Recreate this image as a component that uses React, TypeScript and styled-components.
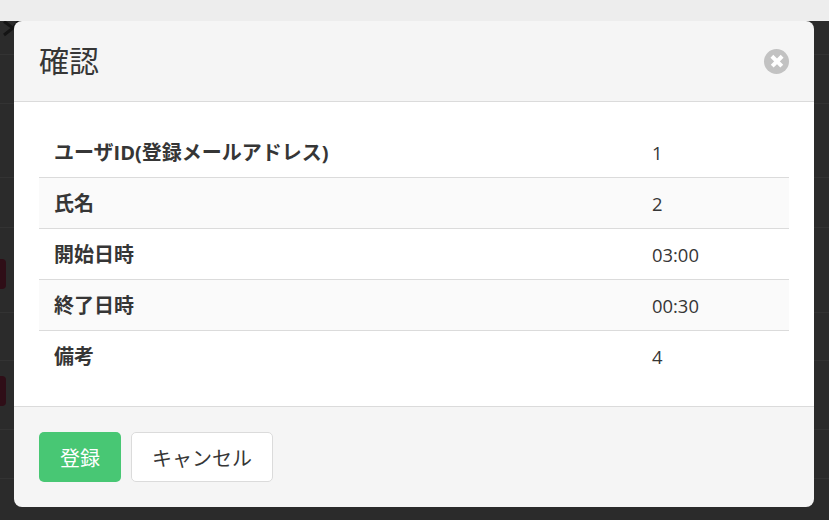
import styled, { createGlobalStyle } from "styled-components"

const rows = [
  { label: "ユーザID(登録メールアドレス)", value: "1" },
  { label: "氏名", value: "2" },
  { label: "開始日時", value: "03:00" },
  { label: "終了日時", value: "00:30" },
  { label: "備考", value: "4" },
]

// rows of the page behind the dimmed overlay
const backdropRows = [
  { height: 34 },
  { height: 49 },
  { height: 74 },
  { height: 50 },
  { height: 85, badgeTop: 31 },
  { height: 48 },
  { height: 69, badgeTop: 15 },
  { height: 49 },
]

export default function App() {
  return (
    <>
      <GlobalStyle />
      <Page>
        <TopBar />
        <Backdrop>
          <CrossIcon viewBox="0 0 24 16">
            <path d="M4 0.5 L13 7 L4 14 M13 7 L20 -1" />
          </CrossIcon>
          {backdropRows.map((row, i) => (
            <BackdropRow key={i} $height={row.height}>
              {row.badgeTop !== undefined && <Badge $top={row.badgeTop} />}
            </BackdropRow>
          ))}
        </Backdrop>
        <Modal>
          <Header>
            <Title>確認</Title>
            <CloseButton aria-label="close" />
          </Header>
          <Body>
            <Table>
              <tbody>
                {rows.map((row) => (
                  <tr key={row.label}>
                    <LabelCell>{row.label}</LabelCell>
                    <ValueCell>{row.value}</ValueCell>
                  </tr>
                ))}
              </tbody>
            </Table>
          </Body>
          <Footer>
            <SubmitButton>登録</SubmitButton>
            <CancelButton>キャンセル</CancelButton>
          </Footer>
        </Modal>
      </Page>
    </>
  )
}

const fontStack = `"Open Sans", "Noto Sans CJK JP", sans-serif`

const GlobalStyle = createGlobalStyle`
  html, body {
    margin: 0;
    padding: 0;
    background: #2b2b2b;
  }
`

const Page = styled.div`
  position: relative;
  width: 829px;
  height: 520px;
  overflow: hidden;
  background: #2b2b2b;
  font-family: ${fontStack};
`

const TopBar = styled.div`
  height: 21px;
  background: #ededed;
`

const Backdrop = styled.div`
  position: relative;
  height: 499px;
  background: #2b2b2b;
`

const CrossIcon = styled.svg`
  position: absolute;
  top: 0;
  left: 0;
  width: 24px;
  height: 16px;
  fill: none;
  stroke: #141414;
  stroke-width: 3;
`

const BackdropRow = styled.div<{ $height: number }>`
  position: relative;
  height: ${(p) => p.$height}px;
  border-bottom: 1px solid #333333;
  box-sizing: border-box;
`

const Badge = styled.div<{ $top: number }>`
  position: absolute;
  top: ${(p) => p.$top}px;
  left: -8px;
  width: 14px;
  height: 30px;
  border-radius: 4px;
  background: #2f0e17;
`

const Modal = styled.div`
  position: absolute;
  top: 21px;
  left: 14px;
  width: 800px;
  height: 486px;
  display: flex;
  flex-direction: column;
  border-radius: 8px;
  overflow: hidden;
  background: #f5f5f5;
`

const Header = styled.header`
  flex: none;
  height: 81px;
  box-sizing: border-box;
  display: flex;
  align-items: center;
  justify-content: space-between;
  padding: 0 25px;
  border-bottom: 1px solid #dbdbdb;
`

const Title = styled.p`
  margin: 0;
  font-size: 30px;
  line-height: 1;
  color: #363636;
`

const CloseButton = styled.button`
  position: relative;
  width: 25px;
  height: 25px;
  padding: 0;
  border: none;
  border-radius: 50%;
  background: #c2c2c2;

  &::before,
  &::after {
    content: "";
    position: absolute;
    top: 50%;
    left: 50%;
    width: 14px;
    height: 3.5px;
    background: #ffffff;
    transform: translate(-50%, -50%) rotate(45deg);
  }

  &::after {
    transform: translate(-50%, -50%) rotate(-45deg);
  }
`

const Body = styled.section`
  flex: none;
  height: 304px;
  box-sizing: border-box;
  padding: 24px 25px 0;
  background: #ffffff;
`

const Table = styled.table`
  width: 100%;
  border-collapse: collapse;
  color: #363636;

  tr:nth-child(even) {
    background: #fafafa;
  }

  tr:not(:last-child) td {
    border-bottom: 1px solid #dbdbdb;
  }
`

const LabelCell = styled.td`
  width: 598px;
  height: 51px;
  box-sizing: border-box;
  padding: 0 15px;
  font-size: 20px;
  font-weight: 700;
`

const ValueCell = styled.td`
  height: 51px;
  box-sizing: border-box;
  padding: 2px 15px 0;
  font-size: 18.4px;
`

const Footer = styled.footer`
  flex: none;
  height: 101px;
  box-sizing: border-box;
  display: flex;
  align-items: center;
  gap: 10px;
  padding: 0 25px;
  border-top: 1px solid #dbdbdb;
`

const FooterButton = styled.button`
  height: 50px;
  box-sizing: border-box;
  padding: 0 20px;
  border-radius: 5px;
  font-family: ${fontStack};
  font-size: 20px;
`

const SubmitButton = styled(FooterButton)`
  border: 1px solid transparent;
  background: #48c774;
  color: #ffffff;
`

const CancelButton = styled(FooterButton)`
  border: 1px solid #dbdbdb;
  background: #ffffff;
  color: #363636;
`
